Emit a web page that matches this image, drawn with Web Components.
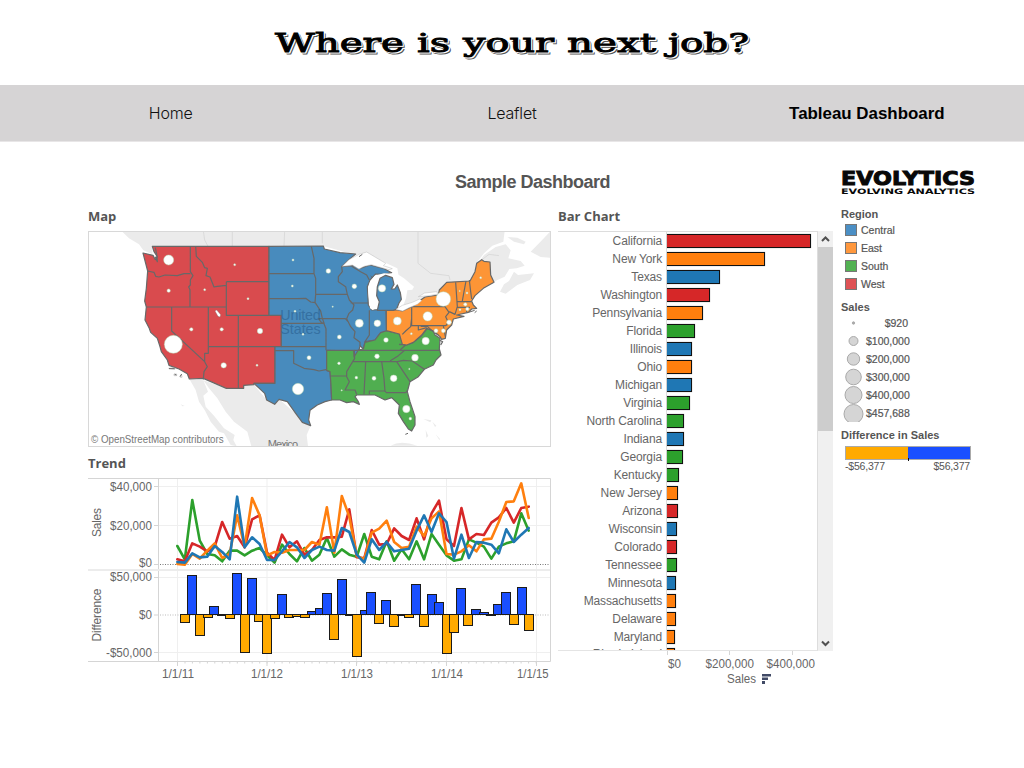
<!DOCTYPE html>
<html lang="en">
<head>
<meta charset="utf-8">
<title>Where is your next job?</title>
<style>
body{margin:0;background:#fff;font-family:"Liberation Sans",Arial,sans-serif;color:#666}
</style>
</head>
<body>
<job-page></job-page>
<script>
const define=(name,render)=>customElements.define(name,class extends HTMLElement{
  constructor(){super();this.attachShadow({mode:'open'})}
  connectedCallback(){this.shadowRoot.innerHTML=render(this)}
});
const txt=(x,y,s,len,extra='')=>`<text x="${x}" y="${y}" textLength="${len}" lengthAdjust="spacingAndGlyphs" ${extra}>${s}</text>`;

const bannerWords=[[275,129,'Where'],[417,33,'is'],[463,91,'your'],[567,89,'next'],[668,81,'job?']];
const bannerLayer=(dx,paint)=>`<g ${paint}>${bannerWords.map(([x,w,s])=>txt(x+dx,52+dx,s,w)).join('')}</g>`;
define('page-banner',()=>`<style>:host{display:block;height:85px}svg{display:block}
text{font:25.5px "DejaVu Serif",serif}</style>
<svg width="1024" height="85">
${bannerLayer(2,'fill="#555" stroke="#555" stroke-width="1"')}
${bannerLayer(1,'fill="#fff" stroke="#fff" stroke-width="1.1"')}
${bannerLayer(0,'fill="#000" stroke="#000" stroke-width=".9"')}</svg>`);

define('nav-link',el=>`<style>:host{display:flex;justify-content:center;align-items:center;font:300 16px Inter,"Liberation Sans",sans-serif;letter-spacing:-.2px;color:#111}
:host([current]){font:bold 16.9px "Liberation Sans",sans-serif;letter-spacing:0;color:#000;padding:2px 0 0 27px}</style><slot></slot>`);

define('nav-bar',()=>`<style>:host{display:grid;grid-template-columns:repeat(3,1fr);height:56px;background:#d6d4d5;border-bottom:1px solid #e8e6e7}</style>
<nav-link>Home</nav-link><nav-link>Leaflet</nav-link><nav-link current>Tableau Dashboard</nav-link>`);

define('panel-title',()=>`<style>:host{display:block;font:bold 13px/16px "Open Sans",sans-serif;color:#555;height:16px;white-space:nowrap}</style><slot></slot>`);

/* Map: drawn in thirds of a pixel. */
const dots=(list)=>list.map(([x,y,r])=>`<circle cx="${x}" cy="${y}" r="${r}"/>`).join('');
define('sales-map',()=>`<style>:host{display:block;height:216px}svg{display:block}
.w{fill:#d94b4e}.c{fill:#488bbd}.s{fill:#50ae50}.e{fill:#fd9536}
.w,.c,.s,.e,.l{stroke:#686868;stroke-width:3.6;stroke-linejoin:round}.l{fill:none}
.land{fill:#ebebeb}.water{fill:#fff}.bd{fill:none;stroke:#d2d2d2;stroke-width:2}
.dots{fill:#fff;stroke:#b8d8b4;stroke-width:1.5}</style>
<svg width="463" height="216" viewBox="12 18 1389 648">
<path class="land" d="M115,20L135,40 165,58 178,76 205,88 205,64 720,64 815,90 840,84 940,130 960,250 1020,230 1165,165 1180,110 1200,85 1225,62 1258,50 1262,18H115Z"/>
<path class="land" d="M1158,160L1180,118 1200,90 1235,66 1265,58 1280,76 1273,100 1310,108 1322,122 1298,130 1276,132 1262,155 1240,165 1225,175ZM1248,200L1260,178 1275,168 1290,140 1302,150 1350,145 1338,165 1300,180 1265,206ZM1340,80L1365,55 1398,20V98L1370,96ZM1270,36L1300,38 1325,50 1320,58 1290,50Z"/>
<path class="bd" d="M358,18L362,45 372,64M445,18V64M602,18L600,64M715,18V55M1002,18V115L1040,145 1095,152 1098,165M1180,115L1215,88 1245,92"/>
<path class="land" d="M316,462L358,466 372,500 358,512 365,545 390,572 420,610 452,630 448,645 458,664 440,660 420,625 405,620 380,590 362,555 345,530 335,495ZM358,466L427,490 510,479 548,525 585,522 640,570 680,602 668,630 672,664H502L490,620 450,590 425,560 400,520 375,490Z"/>
<path class="land" d="M290,538l12,5-7,1zM920,662Q950,645 1000,662ZM1018,582l24,4-3,6zM1045,590l12,12-4,4zM1025,615l8,18-6,5zM1055,628l13,14-2,3z"/>
<path class="w" d="M205,64H555V271H592V365H573V475H510V479L479,481V490H427L358,460 316,462 310,446 285,432 255,421 250,405 232,380 228,365 220,340 200,322 195,308 183,285 187,246 182,228 187,190 191,138 177,84 207,91 214,104 220,95 210,80Z"/>
<path class="l" d="M191,138L210,142 215,154 225,156 243,150 280,152 300,146H319M319,64V140L327,152 319,165V180L314,186 318,194V246M187,246H427M335,64L337,94 355,112 362,128 370,130 366,152 378,156 390,186 400,184 427,181M427,170H555M427,170V271H555M263,246V318L362,410M373,246V385H362V410L370,425 360,440 358,463M427,271H463V490M373,365H592M214,68L218,88 220,110 214,95"/>
<path class="c" d="M555,64L718,63 721,72 768,83 815,87 795,104 773,125 808,122 828,130 858,120 898,130 923,143 900,148 875,147 858,165 850,185 853,240 863,255 906,253 908,320 888,325 873,345 843,350 838,372 828,362 823,385 810,396V378L728,376V436L738,440 741,480 743,525 723,530 700,540 678,556 674,585 680,602 655,592 635,565 610,530 585,523 572,538 548,525 542,505 510,475H573V365H592V271H555Z"/>
<path class="l" d="M555,146H691M555,221H640L665,220 680,231 693,233M682,64L690,100V146L695,160V208H790M695,208L693,232 710,258 715,280 720,294M592,295H722M703,281H784L792,290M703,281L712,292 720,296 726,311V376M592,365H726M573,377H629V415L660,430 690,434 705,438 726,434M773,125L775,140 763,155V170L785,185 790,208 796,225 810,240 806,255 795,265 788,281 800,305 813,320 810,338 828,352V362M800,234H853M856,256V330L843,350M803,124L830,140 848,150 856,165"/>
<path class="s" d="M728,376H810V396L823,375 838,372 843,352 873,345 890,323 908,317 946,327 958,350 968,360 988,352 1013,332 1030,310 1048,318 1053,330 1068,340 1066,372 1071,390 1056,405 1048,420 1021,433 1003,455 978,470 970,500 978,530 993,575V600L983,618 973,612 958,590 943,565 946,540 923,518 903,525 873,510H818L813,515 823,530 826,538 808,530 788,533 768,525 743,525 741,480 738,440 728,436Z"/>
<path class="l" d="M738,453H788M810,378L812,400 800,420 788,440V455L796,470 783,495H813L818,508M810,376H1068M808,410H943M963,375L943,392 918,408M845,410L840,508M893,410L900,460 903,500M856,508V498H903L907,503H965L970,497M938,410L958,440 978,470M940,410 958,406 985,408 1021,433M945,358L965,360 948,375"/>
<path class="e" d="M907,255L936,254 955,258 983,245 1010,225 1023,216 1063,210 1066,195 1088,172 1158,168 1173,140 1178,115 1193,104 1200,109 1218,111 1220,150 1230,172 1198,190 1173,212 1163,228 1168,240 1178,250 1163,252 1153,262 1118,270 1140,274 1108,282 1103,300 1088,315 1084,340 1073,343 1068,335 1048,318 1028,310 1013,330 988,352 968,360 955,358 946,327 907,317Z"/>
<path class="l" d="M983,247V302H1085L1095,292M983,245H1083L1095,262 1085,275 1092,290 1088,302M1115,172L1120,245 1113,268 1096,260M1146,168L1140,200 1135,228M1156,165L1160,200 1163,222M1118,230H1163M1118,247H1158M1148,247V262M983,280L980,305 965,318 955,328M1003,302V315L1028,308M1010,304L1030,304 1050,322 1063,330M1078,302L1084,335M1066,345L1076,350 1070,360"/>
<path class="water l" style="stroke:#bbb;stroke-width:1.5" d="M775,124L795,104 825,88 848,81 905,115 898,122 925,131 915,134 893,128 862,119 840,124 825,132 805,120Z"/>
<path class="water" d="M852,195L858,170 872,152 900,145 940,147 960,160 990,185 985,194 970,196 966,220 956,246 945,254 928,252 882,250 872,252 866,255 858,250Z"/>
<path class="c" d="M888,160L905,151 925,158 930,178 922,192 932,192 940,180 949,203 952,223 945,234 938,252 928,256H880L886,230 878,212 880,185Z"/>
<path class="water l" style="stroke:#bbb;stroke-width:1.5" d="M936,253L955,241 985,232 1007,222 1013,227 1000,238 975,248 956,258ZM1003,215L1022,204 1058,200 1062,207 1035,212Z"/>
<path class="water" d="M393,258l5,-3 12,14-2,7-6-2zM254,430l18,-2v5zM270,447h8v5h-8zM289,452h5v5h-5z" stroke="#777" stroke-width="1"/>
<path fill="none" stroke="#666" stroke-width="3" d="M255,431h17M272,448l5,2M288,455l5-8M825,95l10-7M860,153l4,4M1154,262l18,-6M1172,263l6-5M964,628l8-3"/>
<g font-family="Liberation Sans" font-size="43" fill="#2a5f90" opacity=".6"><text x="589" y="284" textLength="121">United</text><text x="589" y="327" textLength="121">States</text></g>
<g class="dots">${dots([[254,105,15],[254,197,5],[452,119,3],[362,194,3],[492,221,3],[322,313,5],[268,358,27],[413,313,5],[528,318,8],[419,421,8],[519,421,3],[627,105,3],[625,183,3],[633,259,3],[657,328,3],[675,398,6],[642,492,17],[733,138,7],[811,184,7],[746,245,2],[826,295,12],[880,295,10],[766,336,6],[894,190,11],[940,288,12],[1078,222,22],[1031,274,14],[982,326,3],[906,345,7],[1025,348,11],[879,394,7],[993,398,10],[765,415,4],[976,432,2],[817,458,4],[870,460,6],[929,460,10],[773,496,2],[967,552,11],[979,581,4],[1190,158,3],[1127,198,2],[1149,204,3],[1144,238,5],[1128,254,3],[1150,252,5],[1095,292,7],[1056,317,6],[1078,317,6]])}</g>
<g font-family="Liberation Sans" fill="#777"><text x="21" y="654" font-size="33" textLength="398" lengthAdjust="spacingAndGlyphs">© OpenStreetMap contributors</text><text x="551" y="669" font-size="33" textLength="91">Mexico</text></g>
<rect x="13.5" y="19.5" width="1386" height="645" fill="none" stroke="#d8d8d8" stroke-width="3"/>
</svg>`);

/* Trend: monthly series, heights in thirds of a pixel below y = 450 */
const series={
 '#2ca02c':[288,328,150,272,312,316,334,302,302,316,302,294,316,338,284,312,334,294,332,314,264,320,298,314,320,252,320,328,274,332,298,328,274,328,252,284,316,332,328,268,278,290,326,290,280,274,190,242],
 '#d62728':[328,334,280,290,304,290,216,266,258,292,208,196,308,330,254,292,274,314,300,270,262,262,260,178,322,325,240,284,282,235,258,270,205,268,190,152,268,288,174,268,252,255,218,202,174,218,174,170],
 '#ff7f0e':[342,344,312,326,302,280,324,312,196,290,144,196,316,306,308,300,300,300,276,284,172,308,138,200,318,328,248,236,212,276,294,290,230,258,205,184,312,314,304,286,304,268,266,215,156,154,100,204],
 '#1f77b4':[336,338,310,322,320,288,306,328,140,292,262,282,330,330,304,276,292,324,300,290,300,302,234,246,314,338,268,300,276,304,300,296,242,196,246,190,216,326,254,324,276,278,284,310,238,276,254,234]};
const diffs=[[304,173],[324,34],[348,212],[372,160],[391,125],[413,152],[438,163],[459,28],[483,263],[504,42],[526,172],[550,266],[574,163],[594,91],[616,160],[640,157],[662,160],[684,142],[708,131],[729,88],[750,226],[774,46],[798,152],[819,277],[843,139],[861,85],[885,176],[907,109],[929,187],[954,152],[975,160],[996,61],[1020,187],[1043,91],[1066,115],[1089,268],[1111,203],[1131,73],[1153,182],[1176,136],[1200,145],[1221,152],[1242,121],[1267,85],[1289,179],[1313,70],[1335,199]];
define('trend-chart',()=>{
 const lines=Object.entries(series).map(([c,v])=>`<polyline stroke="${c}" points="${v.map((y,i)=>`${84+(280+22.43*i)/3},${450+y/3}`).join(' ')}"/>`).join('');
 const bars=diffs.map(([x,y])=>{const cx=Math.round(84+x/3),v=Math.round(565+y/3),z=615,up=v<z;
  return `<rect x="${cx-4.5}" y="${Math.min(v,z)-.5}" width="9" height="${Math.abs(v-z)}" fill="${up?'#1a4fff':'#ffaa00'}"/>`}).join('');
 const minor=[...Array(49)].map((_,i)=>`M${(177.5+i*7.47).toFixed(1)},662v1.5`).join('');
 return `<style>:host{display:block;height:206px}svg{display:block}text{font-size:12px;fill:#666}
 .g{stroke:#efefef;fill:none}.a{stroke:#d5d5d5;fill:none}</style>
<svg width="466" height="206" viewBox="88 478 466 206">
<path class="g" d="M177.5,478V661M267,478V661M356.5,478V661M446.5,478V661M536.5,478V661M158,486.5H550M158,525.5H550M158,577.5H550M158,652.5H550"/>
<path class="a" d="M88,478.5H550.5V661.5H88M158.5,478V661M154,486.5h4M154,525.5h4M154,564.5h4M154,577.5h4M154,615h4M154,652.5h4M177.5,662v4M267,662v4M356.5,662v4M446.5,662v4M536.5,662v4"/>
<path stroke="#ececec" stroke-width="2" d="M88,570H550"/><path class="a" d="${minor}"/>
<path stroke="#777" stroke-dasharray="1 1.5" d="M160,564.5H550"/><path stroke="#bbb" stroke-dasharray="1 1.5" d="M160,615H550"/>
<g fill="none" stroke-width="2.6" stroke-linejoin="round" stroke-linecap="round">${lines}</g>
<g stroke="#1b1b1b" stroke-width="1">${bars}</g>
${txt(110,490.5,'$40,000',42)}${txt(110,530,'$20,000',42)}${txt(139,567,'$0',13)}
${txt(110,581,'$50,000',42)}${txt(139,619,'$0',13)}${txt(106,656.5,'-$50,000',46)}
${txt(162,678,'1/1/11',32)}${txt(251,678,'1/1/12',32)}${txt(341,678,'1/1/13',32)}${txt(431,678,'1/1/14',32)}${txt(517,678,'1/1/15',31.5)}
<text transform="translate(101 537) rotate(-90)" textLength="29">Sales</text><text transform="translate(101 641.5) rotate(-90)" textLength="53">Difference</text>
</svg>`});

const colors={w:'#d62728',e:'#ff7f0e',c:'#1f77b4',s:'#2ca02c'};
const states='California w 144,New York e 97.5,Texas c 53,Washington w 43,Pennsylvania e 36,Florida s 28,Illinois c 25,Ohio e 24.5,Michigan c 24.5,Virginia s 23,North Carolina s 17,Indiana c 17,Georgia s 16,Kentucky s 12,New Jersey e 11,Arizona w 11,Wisconsin c 10.3,Colorado w 10.3,Tennessee s 10.3,Minnesota c 9.3,Massachusetts e 9.3,Delaware e 9.3,Maryland e 8,Rhode Island e 8'
 .split(',').map(s=>s.match(/^(.*) (\w) ([\d.]+)$/).slice(1));
define('state-bar',el=>`<style>:host{display:grid;grid-template-columns:104px 1fr;column-gap:5px;height:18px;align-items:center}
span{text-align:right;font-size:12px;line-height:18px;letter-spacing:-.13px;white-space:nowrap}
:host([last]) span{margin-top:-2px}
i{display:block;box-sizing:border-box;height:14px;margin-bottom:1px;width:${el.getAttribute('value')}px;background:${el.getAttribute('fill')};border:1px solid #111;border-left:0;box-shadow:0 0 1px #999}</style><span><slot></slot></span><i></i>`);
define('bar-chart',()=>`<style>:host{display:block;width:275px}
.body{display:flex;height:420px;box-sizing:border-box}
.plot{width:260px;box-sizing:border-box;height:420px;overflow:hidden;border:1px solid #ddd;border-left:0;border-bottom:1px solid #e4e4e4;background:linear-gradient(#ddd,#ddd) 108px 0/1px 100% no-repeat}
.scroll{width:15px;background:#f0f0f0;display:flex;flex-direction:column;justify-content:space-between;height:420px}
.thumb{height:184px;background:#cdcdcd}.btn{display:block;height:16px;width:15px}.rest{flex:1}
svg{display:block}text{font-size:12px;fill:#666}</style>
<div class="body"><div class="plot">${states.map(([n,r,v],i)=>`<state-bar fill="${colors[r]}" value="${v}"${i===states.length-1?' last':''}>${n}</state-bar>`).join('')}</div>
<div class="scroll"><svg class="btn"><path d="M4,10L7.5,6.5 11,10" fill="none" stroke="#505050" stroke-width="2"/></svg><div class="thumb"></div><div class="rest"></div><svg class="btn"><path d="M4,6.500L7.5,10 11,6.500" fill="none" stroke="#505050" stroke-width="2"/></svg></div></div>
<svg width="275" height="38" viewBox="558 651 275 38"><path stroke="#d5d5d5" d="M667.500,651v4M729.500,651v4M792.500,651v4"/>
${txt(668,667.5,'$0',13)}${txt(705.5,667.5,'$200,000',48.500)}${txt(766.500,667.5,'$400,000',48.500)}${txt(727,683,'Sales',29)}
<path fill="#414a66" d="M762,674h9v2.500h-9zM762,677.500h6v2.500h-6zM762,681h3v3h-3z"/></svg>`);

define('size-key',el=>{const r=+el.getAttribute('r');return `<style>:host{display:grid;grid-template-columns:25px 42px;height:18px;align-items:center;font:10.500px "Liberation Sans",sans-serif;color:#555}span{text-align:right;-webkit-text-stroke:.2px #555}svg{display:block}</style><svg width="25" height="18"><circle cx="12.500" cy="${r>9?10:9}" r="${r}" fill="${r<2?'#aaa':'#d5d5d5'}" stroke="#aaa"/></svg><span><slot></slot></span>`});
define('color-key',el=>`<style>:host{display:flex;align-items:center;height:18px;gap:4px;padding-left:4px;font-size:10.500px;color:#555;-webkit-text-stroke:.2px #555}i{width:10px;height:10px;border:1px solid #777;background:${el.getAttribute('fill')}}</style><i></i><slot></slot>`);
define('key-title',()=>`<style>:host{display:block;font-weight:bold;font-size:11px;line-height:16px;height:16px;color:#555}</style><slot></slot>`);
define('chart-legend',()=>`<style>:host{display:block;width:140px}svg{display:block;overflow:visible}.logo{font-family:"DejaVu Sans",sans-serif;font-weight:bold;fill:#080808}
.sizes{padding-bottom:5px;margin-top:-1px}.ramp{margin:3px 0 0 4px;width:124px;height:12px;border:1px solid #aaa;background:linear-gradient(90deg,#fa0 50%,#1a4fff 50%);position:relative}
.ramp::after{content:"";position:absolute;left:62px;bottom:-2px;width:1px;height:3px;background:#111}
.ends{display:flex;justify-content:space-between;margin-left:4px;width:125px;font-size:10.500px;line-height:13px;letter-spacing:-.2px;color:#555}.regions{padding-bottom:6px;margin-top:-1px}</style>
<svg class="logo" width="140" height="37" viewBox="841 169 140 37">${txt(841,184.800,'EVOLYTICS',134,'font-size="19.500" stroke="#080808" stroke-width="1"')}${txt(841,193.500,'EVOLVING ANALYTICS',134,'font-size="7.500"')}</svg>
<key-title>Region</key-title>
<div class="regions"><color-key fill="#4b8fc5">Central</color-key><color-key fill="#ff983e">East</color-key><color-key fill="#53b253">South</color-key><color-key fill="#de5255">West</color-key></div>
<key-title>Sales</key-title>
<div class="sizes"><size-key r="1.200">$920</size-key><size-key r="4.500">$100,000</size-key><size-key r="6.200">$200,000</size-key><size-key r="7.800">$300,000</size-key><size-key r="8.500">$400,000</size-key><size-key r="9.500">$457,688</size-key></div>
<key-title>Difference in Sales</key-title>
<div class="ramp"></div><div class="ends"><span>-$56,377</span><span>$56,377</span></div>`);

define('sales-dashboard',()=>`<style>:host{display:grid;grid-template-columns:463px 275px 140px;column-gap:7.500px;padding:27px 0 0 88px}
.main{grid-column:1/3;display:grid;grid-template-columns:463px 275px;column-gap:7px}
h1{grid-column:1/3;margin:0;height:39px;font:bold 18px/26px "Liberation Sans",sans-serif;letter-spacing:-.5px;color:#555;text-align:center;padding-left:144px}
sales-map{margin:7px 0 8px}trend-chart{margin-top:7px}bar-chart{margin-top:7px}</style>
<div class="main"><h1>Sample Dashboard</h1><div><panel-title>Map</panel-title><sales-map></sales-map><panel-title>Trend</panel-title><trend-chart></trend-chart></div>
<div><panel-title>Bar Chart</panel-title><bar-chart></bar-chart></div></div><chart-legend></chart-legend>`);

define('job-page',()=>`<style>:host{display:block;width:1024px;height:768px;overflow:hidden}</style><page-banner></page-banner><nav-bar></nav-bar><sales-dashboard></sales-dashboard>`);
</script>
</body>
</html>
